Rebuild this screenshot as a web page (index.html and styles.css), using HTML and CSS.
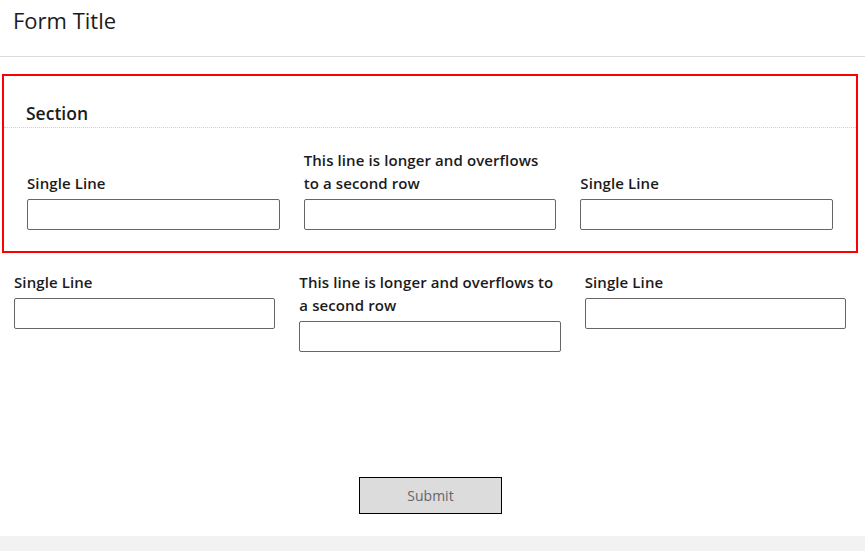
FILE: index.html
```html
<!DOCTYPE html>
<html>
<head>
<meta charset="utf-8">
<link rel="stylesheet" href="styles.css">
</head>
<body>
<div class="page">
  <header class="header"><h1 class="title">Form Title</h1></header>
  <main class="main">
    <section class="section">
      <h2 class="section-title">Section</h2>
      <div class="row row-end">
        <div class="field"><label class="label">Single Line</label><input class="input" type="text"></div>
        <div class="field"><label class="label">This line is longer and overflows to a second row</label><input class="input" type="text"></div>
        <div class="field"><label class="label">Single Line</label><input class="input" type="text"></div>
      </div>
    </section>
    <div class="row row-plain">
      <div class="field"><label class="label">Single Line</label><input class="input" type="text"></div>
      <div class="field"><label class="label">This line is longer and overflows to a second row</label><input class="input" type="text"></div>
      <div class="field"><label class="label">Single Line</label><input class="input" type="text"></div>
    </div>
    <div class="actions"><button class="submit" type="button">Submit</button></div>
  </main>
  <footer class="footer"></footer>
</div>
</body>
</html>
```
FILE: styles.css
```css
* { box-sizing: border-box; }
html, body { margin: 0; padding: 0; background: #fff; }
body { font-family: "Open Sans", "Noto Sans", sans-serif; color: #1b1b1b; }
.page { width: 865px; height: 551px; display: flex; flex-direction: column; overflow: hidden; }
.header { height: 57px; border-bottom: 1px solid #dcdcdc; padding: 5px 13px 0; }
.title { margin: 0; font-size: 22px; font-weight: 400; line-height: 30px; }
.main { flex: 1; padding: 17px 0 0; }
.section { margin: 0 7px 0 2px; border: 2px solid #f00; padding: 25px 23px 21px; }
.section-title { margin: 0 -23px; padding: 0 22px 2px; font-size: 17.5px; font-weight: 600; line-height: 24px; border-bottom: 1px dotted #cfcfcf; }
.row { display: grid; grid-template-columns: repeat(3, 1fr); column-gap: 24px; }
.row-end { align-items: end; margin-top: 21px; }
.row-plain { align-items: start; padding: 18px 19px 0 14px; }
.field { display: flex; flex-direction: column; }
.label { font-size: 15px; font-weight: 600; line-height: 23px; letter-spacing: 0.1px; margin-bottom: 4px; }
.input { height: 31px; border: 1px solid #666; border-radius: 2px; background: #fff; margin: 0; }
.actions { display: flex; justify-content: center; padding: 125px 4px 0 0; }
.submit { width: 143px; height: 37px; background: #dcdcdc; border: 1px solid #000; border-radius: 0; color: #666; font-family: inherit; font-size: 14px; }
.footer { height: 15px; background: #f2f2f2; flex: none; }
```
